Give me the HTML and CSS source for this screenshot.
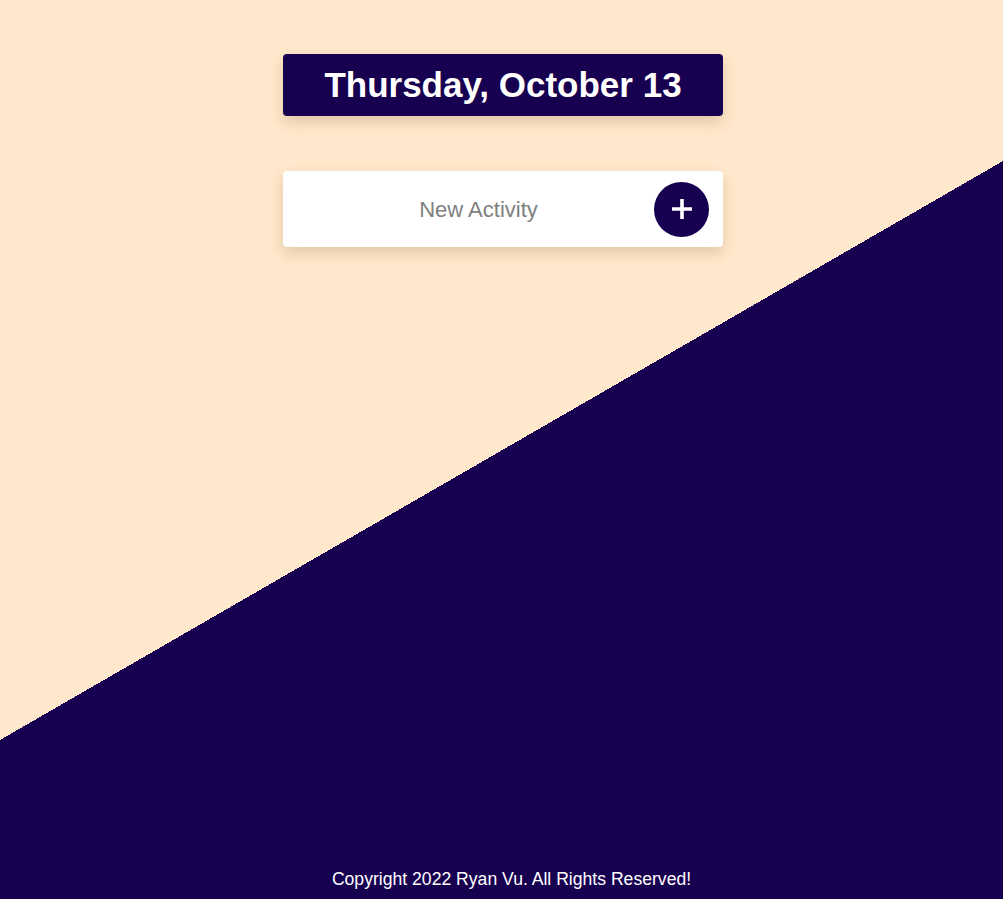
FILE: index.html
```html
<!DOCTYPE html>
<html lang="en">
<head>
<meta charset="utf-8">
<title>To Do</title>
<link rel="stylesheet" href="styles.css">
</head>
<body>
<main class="main">
  <div class="date-box"><h1 class="date">Thursday, October 13</h1></div>
  <form class="card">
    <input class="new-input" type="text" placeholder="New Activity">
    <button class="add-btn" type="button" aria-label="Add">
      <svg width="22" height="22" viewBox="0 0 22 22"><path d="M11 1v20M1 11h20" stroke="#fff" stroke-width="3.6" fill="none"/></svg>
    </button>
  </form>
</main>
<footer class="footer">Copyright 2022 Ryan Vu. All Rights Reserved!</footer>
</body>
</html>
```
FILE: styles.css
```css
html, body { margin: 0; padding: 0; }
body {
  height: 100vh;
  display: flex;
  flex-direction: column;
  align-items: center;
  font-family: "Liberation Sans", Arial, sans-serif;
  background:
    linear-gradient(#ffe8cc, #ffe8cc) 0 0 / 100% 161px no-repeat,
    linear-gradient(to bottom right, #ffe8cc 50%, #170050 50%) 0 161px / 100% 579px no-repeat,
    #170050;
  overflow: hidden;
}
.main {
  display: flex;
  flex-direction: column;
  align-items: center;
  gap: 55px;
  padding-top: 54px;
  padding-left: 3px;
}
.date-box {
  width: 440px;
  height: 62px;
  background: #170050;
  border-radius: 4px;
  box-shadow: 0 6px 14px rgba(120, 80, 30, 0.22);
  display: flex;
  align-items: center;
  justify-content: center;
}
.date {
  margin: 0;
  color: #fff;
  font-size: 35px;
  font-weight: bold;
}
.card {
  width: 440px;
  height: 76px;
  box-sizing: border-box;
  background: #fff;
  border-radius: 4px;
  box-shadow: 0 6px 14px rgba(120, 80, 30, 0.22);
  display: flex;
  align-items: center;
  padding: 0 14px;
  margin: 0;
}
.new-input {
  flex: 1;
  min-width: 0;
  border: none;
  outline: none;
  background: transparent;
  font-family: "Liberation Sans", Arial, sans-serif;
  font-size: 22px;
  text-align: center;
  padding: 2px 0 0 6px;
  color: #333;
}
.new-input::placeholder { color: #808080; }
.add-btn {
  width: 55px;
  height: 55px;
  border-radius: 50%;
  border: none;
  background: #170050;
  display: flex;
  align-items: center;
  justify-content: center;
  padding: 0;
  cursor: pointer;
}
.footer {
  margin-top: auto;
  padding: 0 0 9px 20px;
  color: #fff;
  font-size: 17.6px;
}
```
